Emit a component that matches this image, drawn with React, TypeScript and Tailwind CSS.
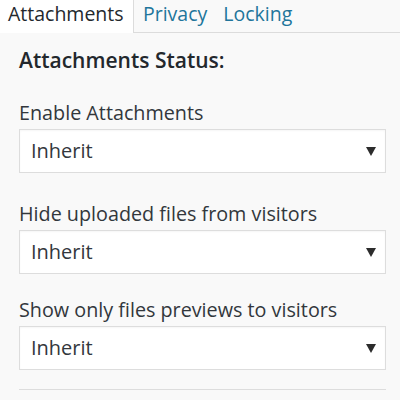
import { Fragment } from "react";

const fields = [
  "Enable Attachments",
  "Hide uploaded files from visitors",
  "Show only files previews to visitors",
];

function SelectBox() {
  return (
    <div className="flex h-[44px] items-center justify-between border border-[#dddddd] bg-white pl-[11px] pr-[9px] shadow-[inset_0_1px_2px_rgba(0,0,0,0.04)]">
      <span className="text-[20px] leading-none text-[#32373c]">Inherit</span>
      <svg width="10" height="9" viewBox="0 0 10 9" aria-hidden>
        <path d="M0 0 H10 L5 9 Z" fill="#2c2c2c" />
      </svg>
    </div>
  );
}

export default function App() {
  return (
    <div
      className="h-[400px] w-[400px] overflow-hidden bg-[#f9f9f9]"
      style={{ fontFamily: '"Open Sans", "Noto Sans", sans-serif' }}
    >
      <div className="flex h-[33px] items-stretch">
        <div className="w-[134px] border-r border-[#dcdcdc] bg-white pt-[1px] pl-[8px] text-[19.5px] leading-[26px] text-[#23282d]">
          Attachments
        </div>
        <div className="flex flex-1 items-start gap-[16px] border-b border-[#dcdcdc] pt-[1px] pl-[9px] text-[19.5px] leading-[26px] text-[#21759b]">
          <span>Privacy</span>
          <span>Locking</span>
        </div>
      </div>

      <div className="px-[19px] pr-[14px]">
        <h2 className="mt-[15px] text-[21px] leading-[24px] font-semibold text-[#23282d]">
          Attachments Status:
        </h2>
        {fields.map((label, i) => (
          <Fragment key={label}>
            <div
              className={`${i === 0 ? "mt-[29px]" : i === 1 ? "mt-[29px]" : "mt-[24px]"} mb-[4px] text-[19.75px] leading-[24px] text-[#32373c]`}
            >
              {label}
            </div>
            <SelectBox />
          </Fragment>
        ))}
        <div className="mt-[19px] border-t border-[#dddddd]" />
      </div>
    </div>
  );
}
